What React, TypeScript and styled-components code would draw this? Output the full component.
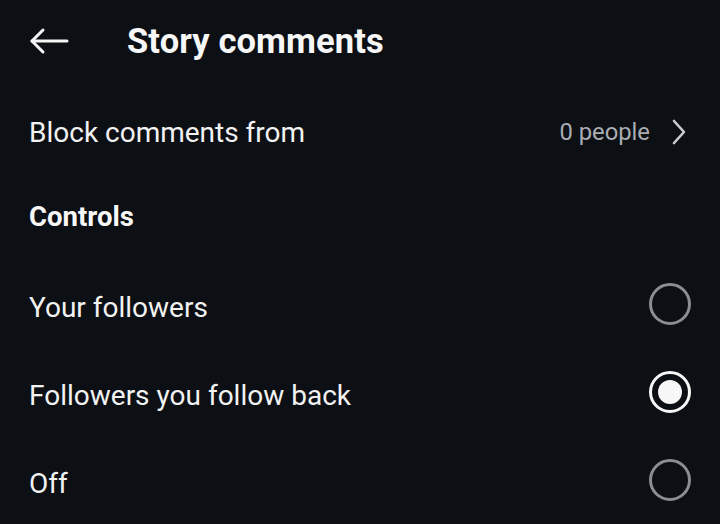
import React, { useState } from "react";
import styled, { createGlobalStyle } from "styled-components";

const Global = createGlobalStyle`
  html, body { margin: 0; padding: 0; background: #0c0f14; }
  body { font-family: Roboto, "Noto Sans", "Liberation Sans", sans-serif; color: #f5f5f5; }
`;

const Screen = styled.div`
  width: 720px;
  height: 524px;
  background: #0c0f14;
  overflow: hidden;
  display: flex;
  flex-direction: column;
`;

const Header = styled.div`
  height: 82px;
  display: flex;
  align-items: center;
  padding-left: 29px;
  gap: 58px;
`;

const BackButton = styled.button`
  background: none;
  border: none;
  padding: 0;
  width: 40px;
  height: 30px;
  display: flex;
  align-items: center;
  color: #f5f5f5;
`;

const Title = styled.h1`
  margin: 0;
  font-size: 34.5px;
  font-weight: 700;
  letter-spacing: 0.1px;
  color: #f7f7f7;
`;

const NavRow = styled.div`
  height: 100px;
  display: flex;
  align-items: center;
  justify-content: space-between;
  padding: 0 34px 0 29px;
`;

const Label = styled.span`
  font-size: 28px;
  font-weight: 400;
  color: #f2f2f2;
`;

const Trailing = styled.div`
  display: flex;
  align-items: center;
  gap: 22px;
`;

const Value = styled.span`
  font-size: 23.8px;
  color: #a9acb2;
`;

const SectionHeading = styled.div`
  height: 68px;
  display: flex;
  align-items: center;
  padding-left: 29px;
  font-size: 27.5px;
  font-weight: 700;
  color: #f7f7f7;
`;

const Options = styled.div`
  margin-top: 10px;
  display: flex;
  flex-direction: column;
`;

const OptionRow = styled.label`
  height: 88px;
  display: flex;
  align-items: center;
  justify-content: space-between;
  padding: 0 29px 0 29px;
  cursor: pointer;
`;

const OptionText = styled(Label)`
  position: relative;
  top: 3px;
`;

const Radio = styled.span<{ $on: boolean }>`
  width: 42px;
  height: 42px;
  box-sizing: border-box;
  border-radius: 50%;
  border: 3px solid ${(p) => (p.$on ? "#f7f7f7" : "#8a8d93")};
  display: flex;
  align-items: center;
  justify-content: center;
  &::after {
    content: "";
    width: 24px;
    height: 24px;
    border-radius: 50%;
    background: #f7f7f7;
    display: ${(p) => (p.$on ? "block" : "none")};
  }
`;

const options = ["Your followers", "Followers you follow back", "Off"];

export default function App() {
  const [sel, setSel] = useState(1);
  return (
    <Screen>
      <Global />
      <Header>
        <BackButton aria-label="Back">
          <svg width="40" height="28" viewBox="0 0 40 28" fill="none" stroke="#f5f5f5" strokeWidth="3" strokeLinecap="round" strokeLinejoin="round">
            <path d="M38 14H3" />
            <path d="M14 3L3 14L14 25" />
          </svg>
        </BackButton>
        <Title>Story comments</Title>
      </Header>
      <NavRow>
        <Label>Block comments from</Label>
        <Trailing>
          <Value>0 people</Value>
          <svg width="14" height="26" viewBox="0 0 14 26" fill="none" stroke="#c9ccd1" strokeWidth="2.6" strokeLinecap="round" strokeLinejoin="round">
            <path d="M2 2L12 13L2 24" />
          </svg>
        </Trailing>
      </NavRow>
      <SectionHeading>Controls</SectionHeading>
      <Options>
        {options.map((o, i) => (
          <OptionRow key={o} onClick={() => setSel(i)}>
            <OptionText>{o}</OptionText>
            <Radio $on={sel === i} />
          </OptionRow>
        ))}
      </Options>
    </Screen>
  );
}
